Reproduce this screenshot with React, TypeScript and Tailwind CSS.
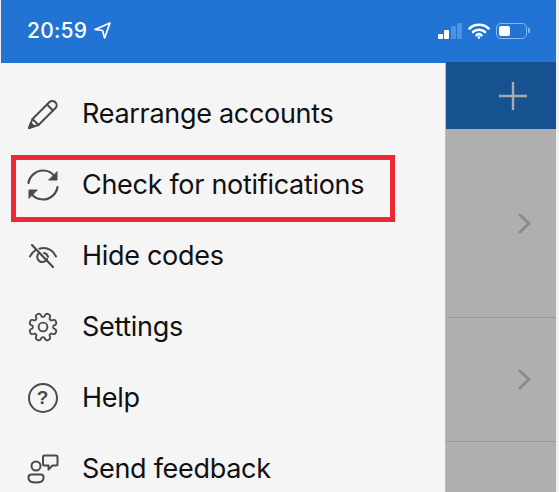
const stroke = "#4a4a4a";

function Pencil() {
  return (
    <svg width="32" height="32" viewBox="0 0 32 32" fill="none" stroke={stroke} strokeWidth="2" strokeLinejoin="round" strokeLinecap="round">
      <path d="M2 30 L5.5 21 L22.5 4 C24 2.5 26.5 2.5 28 4 L28.5 4.5 C30 6 30 8.5 28.5 10 L11.5 27 Z" />
      <path d="M20 6.5 L26 12.5" />
      <path d="M5.5 21 L11.5 27" />
      <path d="M2 30 L3.7 25.3 L6.8 28 Z" fill={stroke} />
    </svg>
  );
}
function Sync() {
  return (
    <svg width="32" height="32" viewBox="0 0 32 32" fill="none" stroke={stroke} strokeWidth="2.2" strokeLinecap="round" strokeLinejoin="round">
      <path d="M1.5 14 C2.5 7 9 1.5 16 1.5 C21 1.5 25.5 4 28 8" />
      <path d="M30.5 18 C29.5 25 23 30.5 16 30.5 C11 30.5 6.5 28 4 24" />
      <path d="M30 3 V11 H22 Z" fill={stroke} strokeWidth="1" />
      <path d="M2 29 V21 H10 Z" fill={stroke} strokeWidth="1" />
    </svg>
  );
}
function EyeOff() {
  return (
    <svg width="28" height="24" viewBox="0 0 28 24" fill="none" stroke={stroke} strokeWidth="2" strokeLinecap="round" strokeLinejoin="round">
      <path d="M1 12.5 C2.5 9.5 4 8 6 6.5" />
      <path d="M10.5 4.7 C12 4.2 13 4 14.5 4 C20 4 24.5 7.5 27 12.5" />
      <path d="M9.5 9.5 C6.5 13.5 9.5 18.5 14 18 C16 17.7 17.5 16.5 18 15" />
      <path d="M15 9 C17 9.4 18.5 11 19 13" />
      <path d="M3 1 L24 23" strokeWidth="2.2" />
    </svg>
  );
}
function gearPath() {
  const cx = 15, cy = 15, rOut = 14, rIn = 10.6, n = 8;
  const pt = (r: number, a: number) =>
    `${(cx + r * Math.cos(a)).toFixed(2)} ${(cy + r * Math.sin(a)).toFixed(2)}`;
  const step = (Math.PI * 2) / n;
  let d = "";
  for (let i = 0; i < n; i++) {
    const a = i * step + step / 2;
    const t = step * 0.27;
    d += `${i === 0 ? "M" : "L"}${pt(rIn, a - t * 1.25)} `;
    d += `Q${pt(rOut + 0.6, a - t)} ${pt(rOut, a)} `;
    d += `Q${pt(rOut + 0.6, a + t)} ${pt(rIn, a + t * 1.25)} `;
    d += `Q${pt(rIn - 0.9, a + step / 2)} ${pt(rIn, a + step - t * 1.25)} `;
  }
  return d + "Z";
}
function Gear() {
  return (
    <svg width="30" height="30" viewBox="0 0 30 30" fill="none" stroke={stroke} strokeWidth="1.9" strokeLinecap="round" strokeLinejoin="round">
      <path d={gearPath()} />
      <circle cx="15" cy="15" r="4.4" />
    </svg>
  );
}
function Help() {
  return (
    <div className="w-[30px] h-[30px] rounded-full border-2 border-[#4a4a4a] flex items-center justify-center text-[#4a4a4a] text-[19px] font-semibold leading-none [font-family:'Liberation_Sans',sans-serif]">?</div>
  );
}
function Feedback() {
  return (
    <svg width="32" height="30" viewBox="0 0 32 30" fill="none" stroke={stroke} strokeWidth="2" strokeLinecap="round" strokeLinejoin="round">
      <circle cx="9" cy="12" r="4.5" />
      <path d="M4.5 20.5 H14 C15.5 20.5 16.5 21.5 16.5 23 V24 C16.5 27 13.5 28.5 9 28.5 C4.5 28.5 1.5 27 1.5 24 V23 C1.5 21.5 3 20.5 4.5 20.5 Z" />
      <path d="M17.5 1.5 H29 C30 1.5 30.5 2 30.5 3 V10 C30.5 11 30 11.5 29 11.5 H25.5 L21.5 15.5 V11.5 H17.5 C16.5 11.5 16 11 16 10 V3 C16 2 16.5 1.5 17.5 1.5 Z" />
    </svg>
  );
}

const items = [
  { label: "Rearrange accounts", icon: <Pencil /> },
  { label: "Check for notifications", icon: <Sync /> },
  { label: "Hide codes", icon: <EyeOff /> },
  { label: "Settings", icon: <Gear /> },
  { label: "Help", icon: <Help /> },
  { label: "Send feedback", icon: <Feedback /> },
];

export default function App() {
  return (
    <div className="relative w-[559px] h-[492px] overflow-hidden bg-[#f1f1f1] pl-px pr-[3px] flex flex-col [font-family:Inter,'Liberation_Sans',sans-serif]">
      <div className="h-[63px] shrink-0 bg-[#2174d4] flex items-center justify-between pl-[26px] pr-[26px] text-white">
        <div className="flex items-center gap-[7px] pb-[2px]">
          <span className="text-[21px] font-medium leading-none tracking-[0.2px]">20:59</span>
          <svg width="17" height="17" viewBox="0 0 16 16" fill="none" stroke="white" strokeWidth="1.6" strokeLinejoin="round">
            <path d="M15 1 L1 7 L8 8 L10 15 Z" />
          </svg>
        </div>
        <div className="flex items-center gap-[6px] pb-[2px]">
          <div className="flex items-end gap-[1.3px] h-[16px]">
            <div className="w-[5px] h-[5px] rounded-[1px] bg-white" />
            <div className="w-[5px] h-[9px] rounded-[1px] bg-white" />
            <div className="w-[5px] h-[13px] rounded-[1px] bg-[#4e92e0]" />
            <div className="w-[5px] h-[16px] rounded-[1px] bg-[#4e92e0]" />
          </div>
          <svg width="22" height="16" viewBox="0 0 22 16" fill="none" stroke="white" strokeWidth="2.6" strokeLinecap="round">
            <path d="M1.5 5.5 C6.5 0.5 15.5 0.5 20.5 5.5" />
            <path d="M5 9 C8 6 14 6 17 9" />
            <path d="M8.5 12.2 C10 11 12 11 13.5 12.2" />
            <circle cx="11" cy="14.5" r="0.6" fill="white" strokeWidth="1.5" />
          </svg>
          <div className="flex items-center gap-[1px]">
            <div className="w-[31px] h-[16px] rounded-[5px] border border-[#8ab6ea] p-[2px]">
              <div className="w-[11px] h-full rounded-[2px] bg-white" />
            </div>
            <div className="w-[2px] h-[5px] rounded-r-[1px] bg-[#8ab6ea]" />
          </div>
        </div>
      </div>
      <div className="flex-1 flex min-h-0">
        <div className="w-[444px] bg-[#f5f5f5] pt-[15px] flex flex-col">
          {items.map((it) => (
            <div key={it.label} className="h-[71px] shrink-0 flex items-center">
              <div className="w-[81px] shrink-0 flex justify-center pl-[2px]">{it.icon}</div>
              <span className="text-[27px] leading-none tracking-[-0.3px] text-[#111111]">{it.label}</span>
            </div>
          ))}
        </div>
        <div className="flex-1 flex flex-col bg-[#afafaf] border-l border-[#bdbdbd]">
          <div className="h-[67px] -mt-[1px] shrink-0 bg-[#165290] flex items-center justify-end pr-[28px]">
            <svg width="30" height="30" viewBox="0 0 30 30" stroke="#a9a9a9" strokeWidth="2.4">
              <path d="M15 1 V29 M1 15 H29" />
            </svg>
          </div>
          <div className="h-[189px] shrink-0 flex items-center justify-end pr-[25px] border-b border-[#989898]">
            <Chevron />
          </div>
          <div className="h-[124px] shrink-0 flex items-center justify-end pr-[25px] border-b border-[#989898]">
            <Chevron />
          </div>
        </div>
      </div>
      <div className="absolute left-[11px] top-[155px] w-[384px] h-[67px] border-[5px] border-[#ee2737]" />
    </div>
  );
}

function Chevron() {
  return (
    <svg width="13" height="21" viewBox="0 0 13 21" fill="none" stroke="#8a8a8a" strokeWidth="3" strokeLinecap="round" strokeLinejoin="round">
      <path d="M2 2 L11 10.5 L2 19" />
    </svg>
  );
}
